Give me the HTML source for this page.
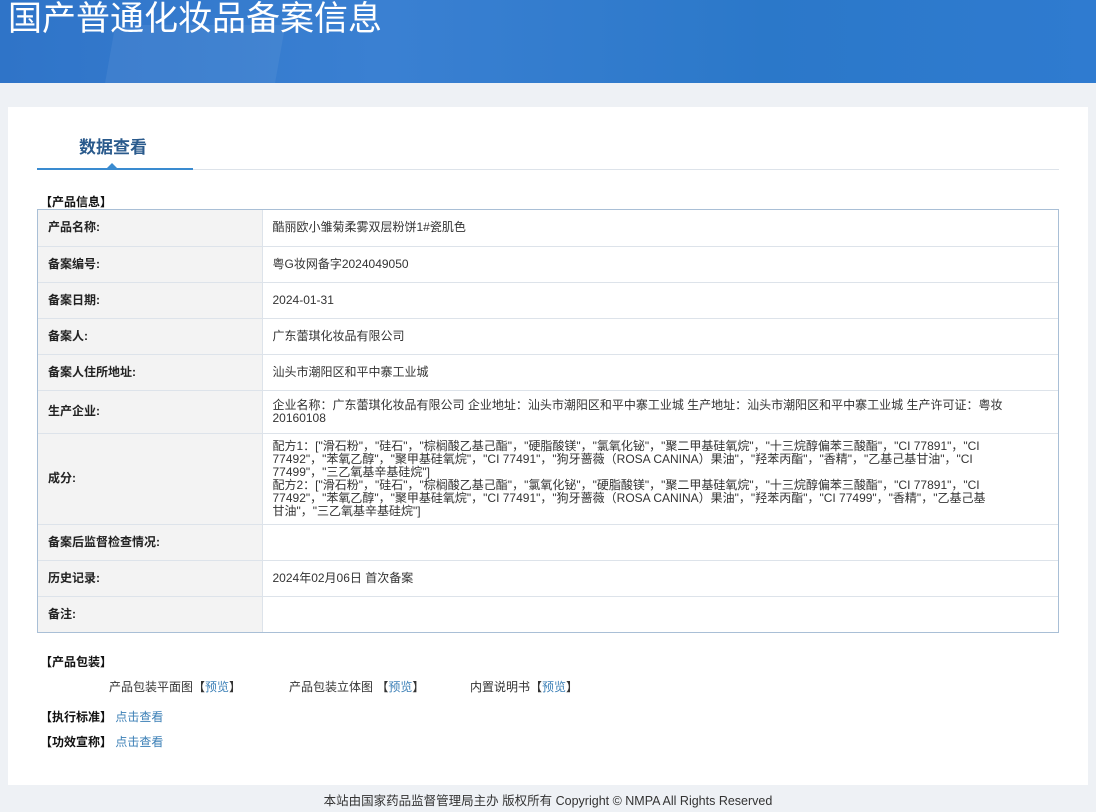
<!DOCTYPE html>
<html><head><meta charset="utf-8"><style>
*{margin:0;padding:0;box-sizing:border-box}
body{width:1096px;height:812px;background:#eef1f5;font-family:"Liberation Sans","Microsoft YaHei","Noto Sans CJK SC",sans-serif;font-size:12px;color:#333;position:relative;overflow:hidden}
.hd{position:absolute;left:0;top:0;width:1096px;height:83px;background:linear-gradient(90deg,#2f74c8 0%,#3a80d2 35%,#2b78c9 70%,#2f7bd0 100%);overflow:hidden}
.hd .t{position:absolute;left:8px;top:-6px;font-size:34px;color:#fff;font-family:"Noto Sans CJK SC",sans-serif;line-height:44px}
.hd .s{position:absolute;left:110px;top:25px;width:170px;height:60px;background:rgba(255,255,255,.06);transform:skewX(-10deg)}
.card{position:absolute;left:8px;top:107px;width:1080px;height:678px;background:#fff}
.tab{position:absolute;left:71px;top:26px;font-size:17px;font-weight:bold;color:#2a5a8c}
.line{position:absolute;left:29px;top:62px;width:1022px;height:1px;background:#dde3ea}
.bline{position:absolute;left:29px;top:61px;width:156px;height:2px;background:#3a8bd0}
.tri{position:absolute;left:99px;top:56px;width:0;height:0;border-left:5px solid transparent;border-right:5px solid transparent;border-bottom:5px solid #3a8bd0}
.sec{position:absolute;font-weight:bold;color:#111;font-size:12px}
.tw{position:absolute;left:29px;top:102px;width:1022px;border:1px solid #a9bfd6}
table{width:100%;border-collapse:collapse}
td{border-top:1px solid #dde3ea;font-size:12px;vertical-align:middle;line-height:13px}
tr:first-child td{border-top:none}
td.l{width:224px;background:#f3f3f3;font-weight:bold;padding-left:10px;color:#222;border-right:1px solid #dde3ea}
td.v{padding:0 10px 0 10px;color:#333;white-space:nowrap}
a{color:#3b7fb6;text-decoration:none}
.ft{position:absolute;top:790px;left:0;width:1096px;text-align:center;font-size:12.5px;color:#333}
</style></head><body>
<div class="hd"><div class="s"></div><div class="t">国产普通化妆品备案信息</div></div>
<div class="card">
<div class="tab">数据查看</div>
<div class="line"></div><div class="bline"></div><div class="tri"></div>
<div class="sec" style="left:32px;top:86px">【产品信息】</div>
<div class="tw"><table>
<tr style="height:36px"><td class="l">产品名称:</td><td class="v">酷丽欧小雏菊柔雾双层粉饼1#瓷肌色</td></tr>
<tr style="height:36px"><td class="l">备案编号:</td><td class="v">粤G妆网备字2024049050</td></tr>
<tr style="height:36px"><td class="l">备案日期:</td><td class="v">2024-01-31</td></tr>
<tr style="height:36px"><td class="l">备案人:</td><td class="v">广东蕾琪化妆品有限公司</td></tr>
<tr style="height:36px"><td class="l">备案人住所地址:</td><td class="v">汕头市潮阳区和平中寨工业城</td></tr>
<tr style="height:43px"><td class="l">生产企业:</td><td class="v">企业名称：广东蕾琪化妆品有限公司 企业地址：汕头市潮阳区和平中寨工业城 生产地址：汕头市潮阳区和平中寨工业城 生产许可证：粤妆<br>20160108</td></tr>
<tr style="height:91px"><td class="l">成分:</td><td class="v">配方1：["滑石粉"，"硅石"，"棕榈酸乙基己酯"，"硬脂酸镁"，"氯氧化铋"，"聚二甲基硅氧烷"，"十三烷醇偏苯三酸酯"，"CI 77891"，"CI<br>77492"，"苯氧乙醇"，"聚甲基硅氧烷"，"CI 77491"，"狗牙蔷薇（ROSA CANINA）果油"，"羟苯丙酯"，"香精"，"乙基己基甘油"，"CI<br>77499"，"三乙氧基辛基硅烷"]<br>配方2：["滑石粉"，"硅石"，"棕榈酸乙基己酯"，"氯氧化铋"，"硬脂酸镁"，"聚二甲基硅氧烷"，"十三烷醇偏苯三酸酯"，"CI 77891"，"CI<br>77492"，"苯氧乙醇"，"聚甲基硅氧烷"，"CI 77491"，"狗牙蔷薇（ROSA CANINA）果油"，"羟苯丙酯"，"CI 77499"，"香精"，"乙基己基<br>甘油"，"三乙氧基辛基硅烷"]</td></tr>
<tr style="height:36px"><td class="l">备案后监督检查情况:</td><td class="v"></td></tr>
<tr style="height:36px"><td class="l">历史记录:</td><td class="v">2024年02月06日 首次备案</td></tr>
<tr style="height:36px"><td class="l">备注:</td><td class="v"></td></tr>
</table></div>
<div class="sec" style="left:32px;top:546px">【产品包装】</div>
<div style="position:absolute;left:101px;top:571px">产品包装平面图【<a>预览</a>】</div>
<div style="position:absolute;left:281px;top:571px">产品包装立体图 【<a>预览</a>】</div>
<div style="position:absolute;left:462px;top:571px">内置说明书【<a>预览</a>】</div>
<div style="position:absolute;left:32px;top:601px"><b style="color:#111">【执行标准】</b> <a>点击查看</a></div>
<div style="position:absolute;left:32px;top:626px"><b style="color:#111">【功效宣称】</b> <a>点击查看</a></div>
</div>
<div class="ft">本站由国家药品监督管理局主办 版权所有 Copyright © NMPA All Rights Reserved</div>
</body></html>
